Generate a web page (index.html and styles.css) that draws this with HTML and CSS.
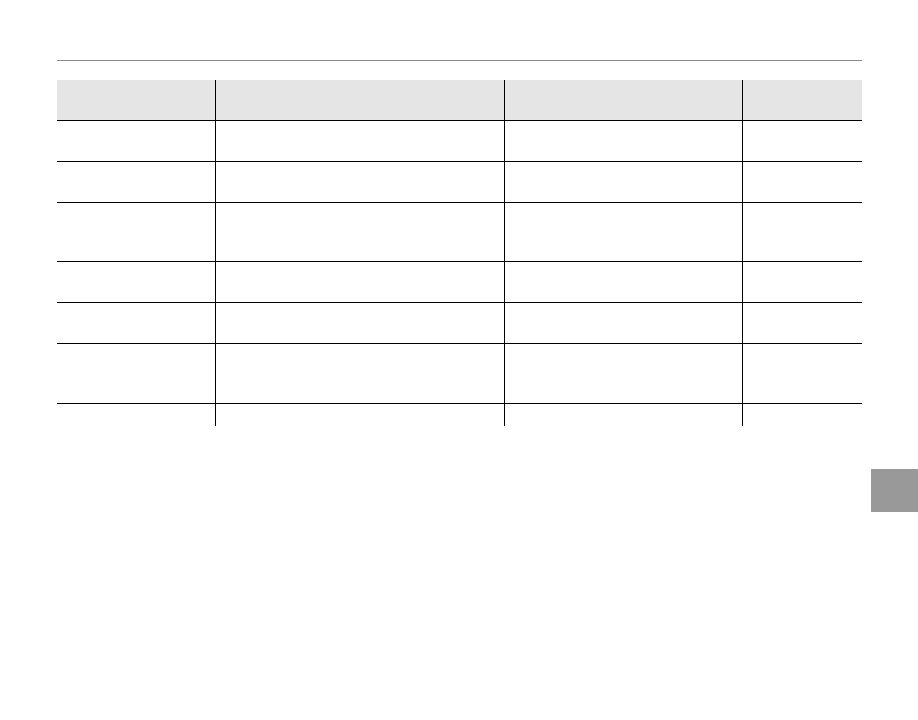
FILE: index.html
```html
<!DOCTYPE html>
<html lang="en">
<head>
<meta charset="utf-8">
<title>Table</title>
<link rel="stylesheet" href="styles.css">
</head>
<body>
<div class="page">
  <div class="rule"></div>
  <div class="table">
    <div class="cell head"></div><div class="cell head"></div><div class="cell head"></div><div class="cell head last-col"></div>
    <div class="cell r41"></div><div class="cell r41"></div><div class="cell r41"></div><div class="cell r41 last-col"></div>
    <div class="cell r41"></div><div class="cell r41"></div><div class="cell r41"></div><div class="cell r41 last-col"></div>
    <div class="cell r59"></div><div class="cell r59"></div><div class="cell r59"></div><div class="cell r59 last-col"></div>
    <div class="cell r41"></div><div class="cell r41"></div><div class="cell r41"></div><div class="cell r41 last-col"></div>
    <div class="cell r41"></div><div class="cell r41"></div><div class="cell r41"></div><div class="cell r41 last-col"></div>
    <div class="cell r60"></div><div class="cell r60"></div><div class="cell r60"></div><div class="cell r60 last-col"></div>
    <div class="cell last-row"></div><div class="cell last-row"></div><div class="cell last-row"></div><div class="cell last-row last-col"></div>
  </div>
</div>
<div class="tab"></div>
</body>
</html>
```
FILE: styles.css
```css
html, body {
  margin: 0;
  padding: 0;
  background: #ffffff;
  font-family: "Liberation Sans", Arial, sans-serif;
}
.page {
  width: 805px;
  margin-left: 57px;
  padding-top: 60px;
}
.rule {
  height: 1px;
  background: #8a8a8a;
}
.table {
  margin-top: 19px;
  display: grid;
  grid-template-columns: 159px 289px 238px 119px;
}
.cell {
  box-sizing: border-box;
  border-right: 1px solid #000;
  border-bottom: 1px solid #000;
  height: 41px;
}
.head {
  background: #e5e5e5;
}
.r41 { height: 41px; }
.r59 { height: 59px; }
.r60 { height: 60px; }
.last-row {
  height: 22px;
  border-bottom: none;
}
.last-col {
  border-right: none;
}
.tab {
  position: absolute;
  left: 871px;
  top: 469px;
  width: 47px;
  height: 43px;
  background: #999999;
}
```
